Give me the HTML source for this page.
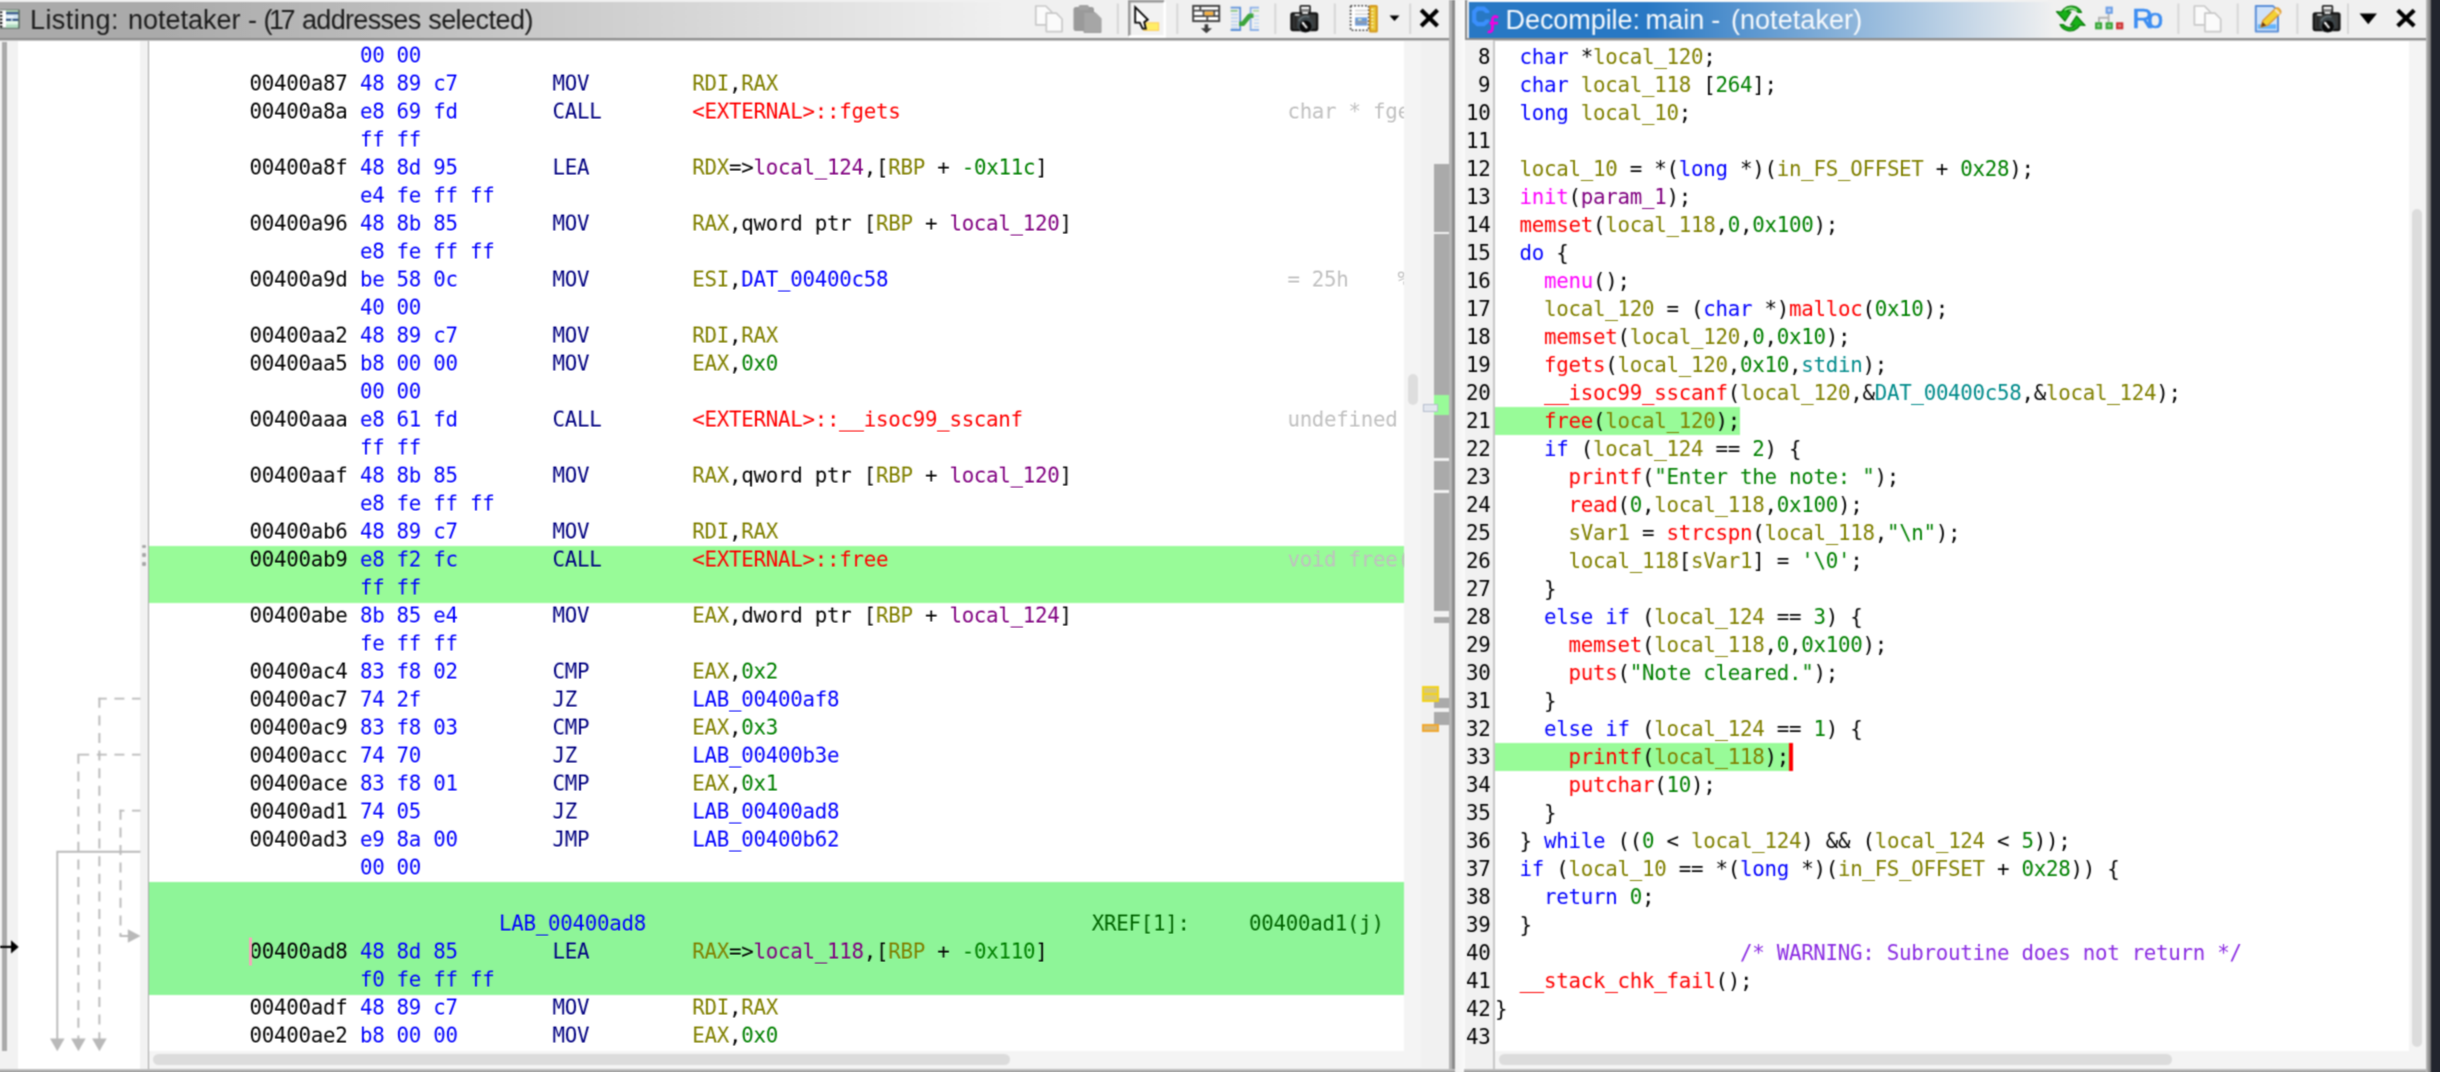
<!DOCTYPE html>
<html lang="en">
<head>
<meta charset="utf-8">
<title>Ghidra - notetaker</title>
<style>

html,body{margin:0;padding:0;background:#f0f0f0;}
#root{position:absolute;left:0;top:0;width:2440px;height:1072px;overflow:hidden;background:#f0f0f0;}
body{width:2440px;height:1072px;position:relative;}
#app,#txt{position:absolute;left:-8px;top:-8px;width:2456px;height:1088px;font-family:"DejaVu Sans Mono","Liberation Mono",monospace;}
#app{background:#f0f0f0;filter:url(#soft);}
#txt{filter:url(#softs);}
#txt2{position:absolute;left:-8px;top:-8px;width:2456px;height:1088px;font-family:"DejaVu Sans Mono","Liberation Mono",monospace;filter:url(#softd);}
.in{position:absolute;left:8px;top:8px;width:2440px;height:1072px;}
.abs{position:absolute;}
.row{position:absolute;left:0;width:2440px;height:28px;}
.f{position:absolute;top:0;height:28px;line-height:28px;font-family:"DejaVu Sans Mono","Liberation Mono",monospace;font-size:20.8px;letter-spacing:-0.28px;white-space:pre;color:#000;}
.f i{font-style:normal;}
.f u{text-decoration:none;background:linear-gradient(currentColor,currentColor) 0 22.8px/100% 2px no-repeat;}
.ln{position:absolute;top:0;left:1466px;width:24.299999999999955px;text-align:right;height:28px;line-height:28px;font-family:"DejaVu Sans Mono","Liberation Mono",monospace;font-size:20.8px;letter-spacing:-0.28px;color:#000;white-space:pre;}
.b{color:#0000ff;} .n{color:#000080;} .o{color:#808000;} .p{color:#800080;}
.g{color:#008000;} .r{color:#ff0000;} .c{color:#c0c0c0;} .m{color:#ff00ff;}
.t{color:#008b8b;} .v{color:#8a2be2;} .x{color:#006400;}
.title{position:absolute;white-space:pre;font-family:"Liberation Sans","DejaVu Sans",sans-serif;}
#lclip{position:absolute;left:150px;top:41px;width:1254px;height:1010px;overflow:hidden;}
#lclip .row{left:-150px;}
#lrows{position:absolute;left:0;top:-41px;}

</style>
</head>
<body>
<svg width="0" height="0" style="position:absolute;left:-10px;top:-10px" aria-hidden="true"><defs><filter id="soft" x="0" y="0" width="100%" height="100%" color-interpolation-filters="sRGB"><feConvolveMatrix order="3 1" kernelMatrix="1 2 1" divisor="4" edgeMode="duplicate"/><feConvolveMatrix order="1 3" kernelMatrix="1 2 1" divisor="4" edgeMode="duplicate"/></filter><filter id="softd" x="0" y="0" width="100%" height="100%" color-interpolation-filters="sRGB"><feConvolveMatrix order="3 1" kernelMatrix="1 3 1" divisor="5" edgeMode="none"/><feConvolveMatrix order="1 3" kernelMatrix="1 3 1" divisor="5" edgeMode="none"/></filter><filter id="softs" x="0" y="0" width="100%" height="100%" color-interpolation-filters="sRGB"><feConvolveMatrix order="3 1" kernelMatrix="1 3 1" divisor="5" edgeMode="none"/><feConvolveMatrix order="1 3" kernelMatrix="0.5 4.5 5" divisor="10" edgeMode="none"/></filter></defs></svg>
<div id="root">
<div id="app"><div class="in">
<div class="abs" style="left:-6px;top:2px;width:1458px;height:36px;background:linear-gradient(to right,#aaaaaa 0px,#aaaaaa 170px,#f0f0f0 1016px);"></div>
<div class="abs" style="left:-6px;top:38.2px;width:1458px;height:1.7px;background:#8e8e8e;"></div>
<div class="abs" style="left:-6px;top:39.9px;width:1458px;height:1.1px;background:#c8c8c8;"></div>
<div class="title" style="left:0;top:4.5px;width:600px;height:30px;line-height:30px;font-size:27px;color:#1a1a1a;"><span style="position:absolute;left:30.0px;top:0;letter-spacing:0.41px">Listing:  </span><span style="position:absolute;left:127.9px;top:0;letter-spacing:-0.01px">notetaker </span><span style="position:absolute;left:247.9px;top:0;letter-spacing:0.00px">- </span><span style="position:absolute;left:263.5px;top:0;letter-spacing:-3.50px">(17 </span><span style="position:absolute;left:302.0px;top:0;letter-spacing:-0.68px">addresses </span><span style="position:absolute;left:428.2px;top:0;letter-spacing:-0.54px">selected)</span></div>
<div class="abs" style="left:0px;top:41px;width:18px;height:1028px;background:#f2f2f2;"></div>
<div class="abs" style="left:2.1px;top:42px;width:5.1px;height:1009px;background:#aaaaaa;"></div>
<div class="abs" style="left:18px;top:41px;width:122px;height:1028px;background:#ffffff;"></div>
<div class="abs" style="left:140px;top:41px;width:8px;height:1028px;background:#f2f2f2;"></div>
<div class="abs" style="left:147.8px;top:41px;width:1.4px;height:1028px;background:#a6a6a6;"></div>
<div class="abs" style="left:142px;top:544.6px;width:3.6px;height:3.6px;background:#a8a8a8;border-radius:1.2px;"></div>
<div class="abs" style="left:142px;top:553.3px;width:3.6px;height:3.6px;background:#a8a8a8;border-radius:1.2px;"></div>
<div class="abs" style="left:142px;top:562px;width:3.6px;height:3.6px;background:#a8a8a8;border-radius:1.2px;"></div>
<div class="abs" style="left:149.2px;top:41px;width:1254.8px;height:1010px;background:#ffffff;"></div>
<div class="abs" style="left:149.2px;top:545.6px;width:1254.8px;height:57.2px;background:#98fb98;"></div>
<div class="abs" style="left:149.2px;top:881.7px;width:1254.8px;height:112.9px;background:#8ef598;"></div>
<div class="abs" style="left:149.5px;top:1051px;width:1254.5px;height:17px;background:#f4f4f4;"></div>
<div class="abs" style="left:153px;top:1053.5px;width:857px;height:11px;background:#dcdcdc;border-radius:5.5px;"></div>
<div class="abs" style="left:1404px;top:41px;width:17px;height:1027px;background:#f4f4f4;"></div>
<div class="abs" style="left:1408px;top:374px;width:10px;height:31px;background:#dedede;border-radius:5px;"></div>
<div class="abs" style="left:1421px;top:41px;width:13px;height:1027px;background:#f1f1f1;"></div>
<div class="abs" style="left:1434px;top:41px;width:15px;height:1027px;background:#f1f1f1;"></div>
<div class="abs" style="left:1434px;top:164px;width:15px;height:68px;background:#aaaaaa;"></div>
<div class="abs" style="left:1434px;top:234px;width:15px;height:161px;background:#aaaaaa;"></div>
<div class="abs" style="left:1434px;top:415px;width:15px;height:43px;background:#aaaaaa;"></div>
<div class="abs" style="left:1434px;top:461px;width:15px;height:29px;background:#aaaaaa;"></div>
<div class="abs" style="left:1434px;top:493px;width:15px;height:118px;background:#aaaaaa;"></div>
<div class="abs" style="left:1434px;top:617px;width:15px;height:6px;background:#aaaaaa;"></div>
<div class="abs" style="left:1434px;top:698px;width:15px;height:10px;background:#aaaaaa;"></div>
<div class="abs" style="left:1434px;top:712px;width:15px;height:13px;background:#aaaaaa;"></div>
<div class="abs" style="left:1434px;top:395px;width:15px;height:20px;background:#98fb98;"></div>
<div class="abs" style="left:1423px;top:403.5px;width:15px;height:8px;background:#e2e6ee;border:1.5px solid #b4bccc;box-sizing:border-box;"></div>
<div class="abs" style="left:1421.6px;top:685.6px;width:17.2px;height:16.8px;background:#d8c878;border:2px solid #f2d21c;box-sizing:border-box;"></div>
<div class="abs" style="left:1423px;top:692.8px;width:14.5px;height:2px;background:#f2d21c;"></div>
<div class="abs" style="left:1422px;top:723.5px;width:17px;height:8.5px;background:#d8b878;border:2px solid #f0a830;box-sizing:border-box;"></div>
<div class="abs" style="left:1449px;top:0px;width:3px;height:1070px;background:#b4b4b4;"></div>
<div class="abs" style="left:1452px;top:0px;width:3px;height:1070px;background:#8c8c8c;"></div>
<div class="abs" style="left:-6px;top:1068.5px;width:1461px;height:9px;background:linear-gradient(to bottom,#c8c8c8 0px,#999999 3.5px);"></div>
<svg class="abs" style="left:0;top:41px" width="150" height="1031" viewBox="0 41 150 1031">
<g fill="none" stroke="#b9b9b9" stroke-width="1.9" stroke-dasharray="10 7.6">
<path d="M140.5 698.6H98.5" stroke-dashoffset="1.5"/><path d="M99.4 697.8V1040"/>
<path d="M140.5 754.6H77.5" stroke-dashoffset="1.5"/><path d="M78.4 753.8V1040"/>
<path d="M140.5 810.6H119.6" stroke-dashoffset="1.5"/><path d="M120.5 809.8V936"/>
</g>
<g fill="none" stroke="#b9b9b9" stroke-width="1.9">
<path d="M119.6 936H130"/>
<path d="M140.5 851.8H57.3V1040"/>
</g>
<g fill="#b9b9b9" stroke="none">
<path d="M50 1038.6h14.6l-7.3 12.6z"/>
<path d="M71.1 1038.6h14.6l-7.3 12.6z"/>
<path d="M92.1 1038.6h14.6l-7.3 12.6z"/>
<path d="M127.8 929.2l12.8 6.8l-12.8 6.8z"/>
</g>
<g fill="#000" stroke="none">
<rect x="-2" y="945.8" width="14" height="2.2"/>
<path d="M11 940.3l7.7 6.6l-7.7 6.6z"/>
</g>
</svg>
<div class="abs" style="left:1455px;top:0px;width:10.5px;height:1072px;background:linear-gradient(to right,#f1f1f1,#fbfbfb);"></div>
<div class="abs" style="left:1465.2px;top:0px;width:2.2px;height:39.8px;background:#8a8a8a;"></div>
<div class="abs" style="left:1467.6px;top:0px;width:960px;height:2px;background:linear-gradient(to right,#ffffff 0px,#ffffff 178px,#f0f0f0 585px);"></div>
<div class="abs" style="left:1467.3px;top:0px;width:1.6px;height:38px;background:#e4e8ee;"></div>
<div class="abs" style="left:1468.9px;top:2px;width:957.1px;height:36px;background:linear-gradient(to right,#2878c4 0px,#2878c4 178px,#f0f0f0 585px);"></div>
<div class="abs" style="left:1465.5px;top:38.2px;width:962.5px;height:1.7px;background:#8e8e8e;"></div>
<div class="abs" style="left:1465.5px;top:39.9px;width:962.5px;height:1.1px;background:#c8c8c8;"></div>
<div class="title" style="left:0;top:4.5px;width:2000px;height:30px;line-height:30px;font-size:27px;color:#f6f9fc;"><span style="position:absolute;left:1505.6px;top:0;letter-spacing:-0.08px">Decompile: </span><span style="position:absolute;left:1645.6px;top:0;letter-spacing:0.03px">main </span><span style="position:absolute;left:1711.3px;top:0;letter-spacing:0.00px">-  </span><span style="position:absolute;left:1730.9px;top:0;letter-spacing:0.07px">(notetaker)</span></div>
<div class="abs" style="left:1465.3px;top:40px;width:28.1px;height:1029px;background:#f1f1f1;"></div>
<div class="abs" style="left:1493.3px;top:41px;width:1.6px;height:1028px;background:#c6c6c6;"></div>
<div class="abs" style="left:1494.9px;top:41px;width:914.1px;height:1009.5px;background:#ffffff;"></div>
<div class="abs" style="left:1494.9px;top:407.2px;width:244.7px;height:28px;background:#98fb98;"></div>
<div class="abs" style="left:1494.9px;top:743.2px;width:293.7px;height:28px;background:#98fb98;"></div>
<div class="abs" style="left:1788.8px;top:743.2px;width:3.8px;height:28px;background:#ff0000;"></div>
<div class="abs" style="left:2409px;top:41px;width:17px;height:1028px;background:#f4f4f4;"></div>
<div class="abs" style="left:2412.3px;top:209px;width:10px;height:838px;background:#dcdcdc;border-radius:5px;"></div>
<div class="abs" style="left:1494.9px;top:1050.5px;width:914.1px;height:18px;background:#f4f4f4;"></div>
<div class="abs" style="left:1498.6px;top:1054.4px;width:673px;height:10.4px;background:#dcdcdc;border-radius:5.2px;"></div>
<div class="abs" style="left:1464px;top:1068.5px;width:964px;height:9px;background:linear-gradient(to bottom,#c8c8c8 0px,#999999 3.5px);"></div>
<div class="abs" style="left:2426px;top:-6px;width:5px;height:1084px;background:linear-gradient(to right,#c0c0c0,#707070);"></div>
<div class="abs" style="left:2431px;top:-6px;width:15px;height:1084px;background:#22252e;"></div>
<svg class="abs" style="left:0;top:0" width="2440" height="41" viewBox="0 0 2440 41">
<g>
<rect x="-2" y="9.6" width="21.6" height="19" fill="#46584e"/>
<rect x="-2" y="10.2" width="8" height="17.4" fill="#ffffff"/>
<rect x="6" y="10.2" width="12.2" height="17.4" fill="#c4ecd2"/>
<rect x="6" y="10.2" width="12.2" height="2" fill="#a4c8a8"/>
<rect x="6" y="12.2" width="12.2" height="2.2" fill="#34508c"/>
<rect x="6" y="14.6" width="12.2" height="4" fill="#d4e4f4"/>
<rect x="7.5" y="16" width="6" height="1.8" fill="#f4f8ff"/>
<rect x="6" y="18.8" width="12.2" height="2" fill="#2c4880"/>
<rect x="11" y="18.8" width="1.6" height="2" fill="#c4d8ec"/>
<rect x="6" y="21.2" width="12.2" height="3.4" fill="#e2f6e8"/>
<rect x="6" y="24.6" width="12.2" height="3" fill="#b0dcc0"/>
<path d="M1.2 11.4v17" stroke="#000" stroke-width="2.2" stroke-dasharray="1.9 1.65"/>
</g>
<g stroke="#c8c8c8" stroke-width="1.7" fill="#fbfbfb" stroke-linejoin="round">
<path d="M1035.8 6h10l5.8 5.8v13H1035.8z"/>
<path d="M1046.3 13.2h10l5.8 5.8v12.6H1046.3z"/>
</g>
<g>
<rect x="1073.5" y="7" width="20.5" height="24" rx="2.5" fill="#9a9a9a"/>
<rect x="1078.5" y="5" width="10.5" height="5" rx="2" fill="#a2a2a2"/>
<path d="M1084 12.5h11l6 6v14h-17z" fill="#a6a6a6" stroke="#9c9c9c" stroke-width="1"/>
</g>
<rect x="1116.8" y="3.5" width="2" height="30.5" fill="#d6d6d6"/>
<g>
<rect x="1128" y="0" width="38" height="38" fill="#f2f2f2"/>
<rect x="1128" y="0" width="36" height="2.6" fill="#9a9a9a"/>
<rect x="1128" y="0" width="2.6" height="36" fill="#9a9a9a"/>
<rect x="1163.4" y="2" width="2.6" height="36" fill="#ffffff"/>
<rect x="1129" y="35.2" width="37" height="2.8" fill="#ffffff"/>
<rect x="1143.8" y="22.8" width="14.8" height="7.6" fill="#ffee66" stroke="#ffd266" stroke-width="1.2"/>
<path d="M1135.2 7.2v15.4h4.6l2.8 6h3.2l-1.6-6.4l3.6-2.6z" fill="#ffffff" stroke="#000" stroke-width="1.8" stroke-linejoin="miter"/>
</g>
<rect x="1176.3" y="3.5" width="2" height="30.5" fill="#d6d6d6"/>
<g>
<rect x="1193.2" y="5.9" width="26" height="15.2" fill="#ffffff" stroke="#444" stroke-width="2"/>
<path d="M1193 10.6h26M1193 16.2h26M1200.3 6v4.6M1203.6 10.6v5.6M1214.2 10.6v5.6M1207.3 16.2v5" stroke="#444" stroke-width="1.8" fill="none"/>
<rect x="1204.6" y="11.7" width="8.6" height="3.6" fill="#f6b040"/>
<path d="M1204.6 24.3h3.6v4h3.8l-5.6 5l-5.6-5h3.8z" fill="#3c3c3c"/>
</g>
<g fill="none">
<path d="M1230.6 7.6h9.6v22.4h-9.6" stroke="#5c90d8" stroke-width="1.8"/>
<path d="M1259 7.6h-8.4v22.4h8.4" stroke="#8ab0e8" stroke-width="1.8"/>
<path d="M1230.6 10.8h7" stroke="#7cc07c" stroke-width="1.6"/>
<path d="M1253 10.8h6" stroke="#a8d8a0" stroke-width="1.6"/>
<path d="M1231 14.5h7M1231 18h7M1231 21.5h7M1231 25h7M1231 28h7" stroke="#b8d0f0" stroke-width="1.4"/>
<path d="M1254 16h5M1254 19.6h5M1254 23.2h5M1254 26.8h5" stroke="#c0d8f4" stroke-width="1.4"/>
<path d="M1239 23.8h4l6.5-8h4" stroke="#3da53d" stroke-width="4.6" stroke-linejoin="round"/>
</g>
<rect x="1274.3" y="3.5" width="2" height="30.5" fill="#d6d6d6"/>
<g>
<rect x="1299.5" y="5" width="11.4" height="9.5" rx="1.6" fill="#262626"/>
<rect x="1301.2" y="6.7" width="8" height="2.5" fill="#f6f6f6"/>
<rect x="1301.2" y="9.2" width="8" height="2.7" fill="#8c8c8c"/>
<rect x="1290.3" y="12.2" width="28" height="19" rx="2.6" fill="#161616"/>
<rect x="1292.7" y="14.4" width="23.2" height="14.4" rx="1" fill="#3a3c3c"/>
<rect x="1293.8999999999999" y="15.6" width="3.2" height="12.2" fill="#2a2a2a"/>
<rect x="1302.3" y="12" width="5.8" height="1.8" fill="#f0f0f0"/>
<rect x="1294.8999999999999" y="13.9" width="4.6" height="1.7" fill="#d4d4d4"/>
<circle cx="1305.3" cy="24.4" r="8.2" fill="#3c4448"/>
<path d="M1298.7 21a8 8 0 0 1 10.5-4" stroke="#5e686c" stroke-width="2" fill="none"/>
<circle cx="1305.6" cy="26.3" r="5.9" fill="#080808"/>
<path d="M1302.8999999999999 23l3.6 4.4" stroke="#d8d8d8" stroke-width="2.3" stroke-linecap="round"/>
<circle cx="1303.2" cy="23.3" r="1.1" fill="#ffffff"/>
</g>
<rect x="1333.8" y="3.5" width="2" height="30.5" fill="#d6d6d6"/>
<g>
<rect x="1350.6" y="5.8" width="18" height="24.4" fill="#ffffff" stroke="#333" stroke-width="1.6" stroke-dasharray="1.7 1.9"/>
<path d="M1355 10.6h12M1355 14.2h12" stroke="#d4d4d4" stroke-width="1.5"/>
<rect x="1355.2" y="17.4" width="12" height="8.2" fill="#6a9cdc"/>
<rect x="1355.2" y="21" width="12" height="2.6" fill="#8a9ab4"/>
<rect x="1358" y="18.8" width="3.6" height="1.6" fill="#e8f0c0"/>
<rect x="1369" y="5" width="8.8" height="27.5" rx="1.6" fill="#d4981c"/>
<rect x="1371" y="7" width="4.8" height="23.5" fill="#e8c636"/>
<path d="M1371 9.5h2.6M1371 13h2.6M1371 16.5h2.6M1371 20h2.6M1371 23.5h2.6M1371 27h2.6" stroke="#fff8d8" stroke-width="1.2"/>
</g>
<path d="M1389.5 15.6H1399.5L1394.5 21z" fill="#000"/>
<rect x="1409.2" y="3.5" width="2" height="30.5" fill="#d6d6d6"/>
<path d="M1421.2 10.0L1437.5 26.0M1437.5 10.0L1421.2 26.0" stroke="#000" stroke-width="4.2" stroke-linecap="butt" fill="none"/>
<g>
<path d="M1487.2 13v-1.2l-3.4-3.2h-6.2l-3.4 3.2v9.2l3.4 3.2h6.2l3.4-3.2v-1.4" fill="none" stroke="#3a8ffc" stroke-width="4.2" stroke-linejoin="miter"/>
<path d="M1498 17.8c-3-2.6-5.6-1-5.6 2.4v8c0 3-2 4.4-4.6 3.2M1489.6 23.2h8.4" fill="none" stroke="#f000e0" stroke-width="2.8"/>
</g>
<g>
<path d="M2081.5 12.5c-3-6.5-12-8.5-17.5-3.5l-2.5 3l-5 -0.5l8.5 9.5l6-9l-4 -0.3c3-3.2 8-3.2 11.5 0.8z" fill="#18b018" stroke="#0a7a0a" stroke-width="1.2" stroke-linejoin="round"/>
<path d="M2060 24.5c3 6.5 12 8.5 17.5 3.5l2.5-3l5 0.5l-8.5-9.5l-6 9l4 0.3c-3 3.2-8 3.2-11.5-0.8z" fill="#18b018" stroke="#0a7a0a" stroke-width="1.2" stroke-linejoin="round"/>
<path d="M2064.5 10c3.5-2.6 9-2.4 12.5 0.5" stroke="#a8f0a0" stroke-width="1.5" fill="none"/>
</g>
<g>
<path d="M2108.6 13v9M2099 22v-4.2h9.6" fill="none" stroke="#b4b4b4" stroke-width="1.9"/>
<rect x="2105.6" y="6.6" width="7.2" height="7.2" fill="#6a9ee6"/><rect x="2107.6" y="8.6" width="3.2" height="3.2" fill="#b8ccf4"/>
<rect x="2095.1" y="22.3" width="7" height="7" fill="#35a535"/><rect x="2097.1" y="24.3" width="3" height="3" fill="#80cc80"/>
<rect x="2105.6" y="22.3" width="7.2" height="7" fill="#35a535"/><rect x="2107.6" y="24.3" width="3.2" height="3" fill="#80cc80"/>
<rect x="2116.1" y="22.3" width="7.2" height="7" fill="#cc3030"/><rect x="2118.1" y="24.3" width="3.2" height="3" fill="#e07878"/>
</g>
<rect x="2177.4" y="3.5" width="2" height="30.5" fill="#d6d6d6"/>
<g stroke="#c8c8c8" stroke-width="1.7" fill="#fbfbfb" stroke-linejoin="round">
<path d="M2194.4 6h10l5.8 5.8v13H2194.4z"/>
<path d="M2204.9 13.2h10l5.8 5.8v12.6H2204.9z"/>
</g>
<rect x="2236.7" y="3.5" width="2" height="30.5" fill="#d6d6d6"/>
<g>
<path d="M2255.8 5.9h17l5.2 5v20.6h-22.2z" fill="#cfe2f8" stroke="#5a8ed8" stroke-width="2" stroke-linejoin="round"/>
<rect x="2257.8" y="24.3" width="18.4" height="4.6" fill="#62b4fc"/>
<path d="M2261 27l2-6.5l12.5-12c2.5-1.5 6 1.5 5 4.5l-12.5 12z" fill="#f2d232" stroke="#e09a38" stroke-width="1.6" stroke-linejoin="round"/>
<path d="M2261 27l1.6-5l3.6 3.6z" fill="#6a3a10"/>
<path d="M2275 9.5l4.5 4.5" stroke="#f8e0c0" stroke-width="2.2"/>
</g>
<rect x="2296.4" y="3.5" width="2" height="30.5" fill="#d6d6d6"/>
<g>
<rect x="2321.7999999999997" y="5" width="11.4" height="9.5" rx="1.6" fill="#262626"/>
<rect x="2323.5" y="6.7" width="8" height="2.5" fill="#f6f6f6"/>
<rect x="2323.5" y="9.2" width="8" height="2.7" fill="#8c8c8c"/>
<rect x="2312.6" y="12.2" width="28" height="19" rx="2.6" fill="#161616"/>
<rect x="2315.0" y="14.4" width="23.2" height="14.4" rx="1" fill="#3a3c3c"/>
<rect x="2316.2" y="15.6" width="3.2" height="12.2" fill="#2a2a2a"/>
<rect x="2324.6" y="12" width="5.8" height="1.8" fill="#f0f0f0"/>
<rect x="2317.2" y="13.9" width="4.6" height="1.7" fill="#d4d4d4"/>
<circle cx="2327.6" cy="24.4" r="8.2" fill="#3c4448"/>
<path d="M2321.0 21a8 8 0 0 1 10.5-4" stroke="#5e686c" stroke-width="2" fill="none"/>
<circle cx="2327.9" cy="26.3" r="5.9" fill="#080808"/>
<path d="M2325.2 23l3.6 4.4" stroke="#d8d8d8" stroke-width="2.3" stroke-linecap="round"/>
<circle cx="2325.5" cy="23.3" r="1.1" fill="#ffffff"/>
</g>
<rect x="2347" y="3.5" width="2" height="30.5" fill="#d6d6d6"/>
<path d="M2359.5 13.4H2377L2368.25 24.2z" fill="#000"/>
<path d="M2397.7 10.2L2414.2 26.0M2414.2 10.2L2397.7 26.0" stroke="#000" stroke-width="4.2" stroke-linecap="butt" fill="none"/>
</svg>
<div class="title" style="left:2132.2px;top:3.2px;height:30px;line-height:30px;font-size:28.5px;letter-spacing:-5.6px;color:#3c8df2;-webkit-text-stroke:0.7px #3c8df2;">Ro</div>
</div></div>
<div id="txt"><div class="in">
<div id="lclip"><div id="lrows">
<div class="row" style="top:41px"><span class="f b" style="left:359.9px">00 00</span></div>
<div class="row" style="top:69px"><span class="f" style="left:249.5px">00400a87</span><span class="f b" style="left:359.9px">48 89 c7</span><span class="f n" style="left:552.5px">MOV</span><span class="f" style="left:692.3px"><i class="o">RDI</i>,<i class="o">RAX</i></span></div>
<div class="row" style="top:97px"><span class="f" style="left:249.5px">00400a8a</span><span class="f b" style="left:359.9px">e8 69 fd</span><span class="f n" style="left:552.5px">CALL</span><span class="f" style="left:692.3px"><i class="r">&lt;EXTERNAL&gt;::fgets</i></span><span class="f c" style="left:1287.4px">char * fge</span></div>
<div class="row" style="top:125px"><span class="f b" style="left:359.9px">ff ff</span></div>
<div class="row" style="top:153px"><span class="f" style="left:249.5px">00400a8f</span><span class="f b" style="left:359.9px">48 8d 95</span><span class="f n" style="left:552.5px">LEA</span><span class="f" style="left:692.3px"><i class="o">RDX</i>=&gt;<i class="p">local<u>_</u>124</i>,[<i class="o">RBP</i> + <i class="g">-0x11c</i>]</span></div>
<div class="row" style="top:181px"><span class="f b" style="left:359.9px">e4 fe ff ff</span></div>
<div class="row" style="top:209px"><span class="f" style="left:249.5px">00400a96</span><span class="f b" style="left:359.9px">48 8b 85</span><span class="f n" style="left:552.5px">MOV</span><span class="f" style="left:692.3px"><i class="o">RAX</i>,qword ptr [<i class="o">RBP</i> + <i class="p">local<u>_</u>120</i>]</span></div>
<div class="row" style="top:237px"><span class="f b" style="left:359.9px">e8 fe ff ff</span></div>
<div class="row" style="top:265px"><span class="f" style="left:249.5px">00400a9d</span><span class="f b" style="left:359.9px">be 58 0c</span><span class="f n" style="left:552.5px">MOV</span><span class="f" style="left:692.3px"><i class="o">ESI</i>,<i class="b">DAT<u>_</u>00400c58</i></span><span class="f c" style="left:1287.4px">= 25h    %</span></div>
<div class="row" style="top:293px"><span class="f b" style="left:359.9px">40 00</span></div>
<div class="row" style="top:321px"><span class="f" style="left:249.5px">00400aa2</span><span class="f b" style="left:359.9px">48 89 c7</span><span class="f n" style="left:552.5px">MOV</span><span class="f" style="left:692.3px"><i class="o">RDI</i>,<i class="o">RAX</i></span></div>
<div class="row" style="top:349px"><span class="f" style="left:249.5px">00400aa5</span><span class="f b" style="left:359.9px">b8 00 00</span><span class="f n" style="left:552.5px">MOV</span><span class="f" style="left:692.3px"><i class="o">EAX</i>,<i class="g">0x0</i></span></div>
<div class="row" style="top:377px"><span class="f b" style="left:359.9px">00 00</span></div>
<div class="row" style="top:405px"><span class="f" style="left:249.5px">00400aaa</span><span class="f b" style="left:359.9px">e8 61 fd</span><span class="f n" style="left:552.5px">CALL</span><span class="f" style="left:692.3px"><i class="r">&lt;EXTERNAL&gt;::<u>_</u><u>_</u>isoc99<u>_</u>sscanf</i></span><span class="f c" style="left:1287.4px">undefined</span></div>
<div class="row" style="top:433px"><span class="f b" style="left:359.9px">ff ff</span></div>
<div class="row" style="top:461px"><span class="f" style="left:249.5px">00400aaf</span><span class="f b" style="left:359.9px">48 8b 85</span><span class="f n" style="left:552.5px">MOV</span><span class="f" style="left:692.3px"><i class="o">RAX</i>,qword ptr [<i class="o">RBP</i> + <i class="p">local<u>_</u>120</i>]</span></div>
<div class="row" style="top:489px"><span class="f b" style="left:359.9px">e8 fe ff ff</span></div>
<div class="row" style="top:517px"><span class="f" style="left:249.5px">00400ab6</span><span class="f b" style="left:359.9px">48 89 c7</span><span class="f n" style="left:552.5px">MOV</span><span class="f" style="left:692.3px"><i class="o">RDI</i>,<i class="o">RAX</i></span></div>
<div class="row" style="top:545px"><span class="f" style="left:249.5px">00400ab9</span><span class="f b" style="left:359.9px">e8 f2 fc</span><span class="f n" style="left:552.5px">CALL</span><span class="f" style="left:692.3px"><i class="r">&lt;EXTERNAL&gt;::free</i></span><span class="f c" style="left:1287.4px">void free(</span></div>
<div class="row" style="top:573px"><span class="f b" style="left:359.9px">ff ff</span></div>
<div class="row" style="top:601px"><span class="f" style="left:249.5px">00400abe</span><span class="f b" style="left:359.9px">8b 85 e4</span><span class="f n" style="left:552.5px">MOV</span><span class="f" style="left:692.3px"><i class="o">EAX</i>,dword ptr [<i class="o">RBP</i> + <i class="p">local<u>_</u>124</i>]</span></div>
<div class="row" style="top:629px"><span class="f b" style="left:359.9px">fe ff ff</span></div>
<div class="row" style="top:657px"><span class="f" style="left:249.5px">00400ac4</span><span class="f b" style="left:359.9px">83 f8 02</span><span class="f n" style="left:552.5px">CMP</span><span class="f" style="left:692.3px"><i class="o">EAX</i>,<i class="g">0x2</i></span></div>
<div class="row" style="top:685px"><span class="f" style="left:249.5px">00400ac7</span><span class="f b" style="left:359.9px">74 2f</span><span class="f n" style="left:552.5px">JZ</span><span class="f" style="left:692.3px"><i class="b">LAB<u>_</u>00400af8</i></span></div>
<div class="row" style="top:713px"><span class="f" style="left:249.5px">00400ac9</span><span class="f b" style="left:359.9px">83 f8 03</span><span class="f n" style="left:552.5px">CMP</span><span class="f" style="left:692.3px"><i class="o">EAX</i>,<i class="g">0x3</i></span></div>
<div class="row" style="top:741px"><span class="f" style="left:249.5px">00400acc</span><span class="f b" style="left:359.9px">74 70</span><span class="f n" style="left:552.5px">JZ</span><span class="f" style="left:692.3px"><i class="b">LAB<u>_</u>00400b3e</i></span></div>
<div class="row" style="top:769px"><span class="f" style="left:249.5px">00400ace</span><span class="f b" style="left:359.9px">83 f8 01</span><span class="f n" style="left:552.5px">CMP</span><span class="f" style="left:692.3px"><i class="o">EAX</i>,<i class="g">0x1</i></span></div>
<div class="row" style="top:797px"><span class="f" style="left:249.5px">00400ad1</span><span class="f b" style="left:359.9px">74 05</span><span class="f n" style="left:552.5px">JZ</span><span class="f" style="left:692.3px"><i class="b">LAB<u>_</u>00400ad8</i></span></div>
<div class="row" style="top:825px"><span class="f" style="left:249.5px">00400ad3</span><span class="f b" style="left:359.9px">e9 8a 00</span><span class="f n" style="left:552.5px">JMP</span><span class="f" style="left:692.3px"><i class="b">LAB<u>_</u>00400b62</i></span></div>
<div class="row" style="top:853px"><span class="f b" style="left:359.9px">00 00</span></div>
<div class="row" style="top:909px"><span class="f b" style="left:499px">LAB<u>_</u>00400ad8</span><span class="f x" style="left:1091.8px">XREF[1]:</span><span class="f x" style="left:1249px">00400ad1(j)</span></div>
<div class="row" style="top:937px"><span class="f" style="left:249.5px">00400ad8</span><span class="f b" style="left:359.9px">48 8d 85</span><span class="f n" style="left:552.5px">LEA</span><span class="f" style="left:692.3px"><i class="o">RAX</i>=&gt;<i class="p">local<u>_</u>118</i>,[<i class="o">RBP</i> + <i class="g">-0x110</i>]</span></div>
<div class="row" style="top:965px"><span class="f b" style="left:359.9px">f0 fe ff ff</span></div>
<div class="row" style="top:993px"><span class="f" style="left:249.5px">00400adf</span><span class="f b" style="left:359.9px">48 89 c7</span><span class="f n" style="left:552.5px">MOV</span><span class="f" style="left:692.3px"><i class="o">RDI</i>,<i class="o">RAX</i></span></div>
<div class="row" style="top:1021px"><span class="f" style="left:249.5px">00400ae2</span><span class="f b" style="left:359.9px">b8 00 00</span><span class="f n" style="left:552.5px">MOV</span><span class="f" style="left:692.3px"><i class="o">EAX</i>,<i class="g">0x0</i></span></div>
</div></div>
<div class="abs" style="left:249.3px;top:937px;width:3px;height:28px;background:#f4a8ba;"></div>
</div></div>
<div id="txt2"><div class="in">
<div class="row" style="top:43px"><span class="ln">8</span><span class="f" style="left:1495.1px">  <i class="b">char</i> *<i class="o">local<u>_</u>120</i>;</span></div>
<div class="row" style="top:71px"><span class="ln">9</span><span class="f" style="left:1495.1px">  <i class="b">char</i> <i class="o">local<u>_</u>118</i> [<i class="g">264</i>];</span></div>
<div class="row" style="top:99px"><span class="ln">10</span><span class="f" style="left:1495.1px">  <i class="b">long</i> <i class="o">local<u>_</u>10</i>;</span></div>
<div class="row" style="top:127px"><span class="ln">11</span></div>
<div class="row" style="top:155px"><span class="ln">12</span><span class="f" style="left:1495.1px">  <i class="o">local<u>_</u>10</i> = *(<i class="b">long</i> *)(<i class="o">in<u>_</u>FS<u>_</u>OFFSET</i> + <i class="g">0x28</i>);</span></div>
<div class="row" style="top:183px"><span class="ln">13</span><span class="f" style="left:1495.1px">  <i class="m">init</i>(<i class="p">param<u>_</u>1</i>);</span></div>
<div class="row" style="top:211px"><span class="ln">14</span><span class="f" style="left:1495.1px">  <i class="r">memset</i>(<i class="o">local<u>_</u>118</i>,<i class="g">0</i>,<i class="g">0x100</i>);</span></div>
<div class="row" style="top:239px"><span class="ln">15</span><span class="f" style="left:1495.1px">  <i class="b">do</i> {</span></div>
<div class="row" style="top:267px"><span class="ln">16</span><span class="f" style="left:1495.1px">    <i class="m">menu</i>();</span></div>
<div class="row" style="top:295px"><span class="ln">17</span><span class="f" style="left:1495.1px">    <i class="o">local<u>_</u>120</i> = (<i class="b">char</i> *)<i class="r">malloc</i>(<i class="g">0x10</i>);</span></div>
<div class="row" style="top:323px"><span class="ln">18</span><span class="f" style="left:1495.1px">    <i class="r">memset</i>(<i class="o">local<u>_</u>120</i>,<i class="g">0</i>,<i class="g">0x10</i>);</span></div>
<div class="row" style="top:351px"><span class="ln">19</span><span class="f" style="left:1495.1px">    <i class="r">fgets</i>(<i class="o">local<u>_</u>120</i>,<i class="g">0x10</i>,<i class="t">stdin</i>);</span></div>
<div class="row" style="top:379px"><span class="ln">20</span><span class="f" style="left:1495.1px">    <i class="r"><u>_</u><u>_</u>isoc99<u>_</u>sscanf</i>(<i class="o">local<u>_</u>120</i>,&amp;<i class="t">DAT<u>_</u>00400c58</i>,&amp;<i class="o">local<u>_</u>124</i>);</span></div>
<div class="row" style="top:407px"><span class="ln">21</span><span class="f" style="left:1495.1px">    <i class="r">free</i>(<i class="o">local<u>_</u>120</i>);</span></div>
<div class="row" style="top:435px"><span class="ln">22</span><span class="f" style="left:1495.1px">    <i class="b">if</i> (<i class="o">local<u>_</u>124</i> == <i class="g">2</i>) {</span></div>
<div class="row" style="top:463px"><span class="ln">23</span><span class="f" style="left:1495.1px">      <i class="r">printf</i>(<i class="g">"Enter the note: "</i>);</span></div>
<div class="row" style="top:491px"><span class="ln">24</span><span class="f" style="left:1495.1px">      <i class="r">read</i>(<i class="g">0</i>,<i class="o">local<u>_</u>118</i>,<i class="g">0x100</i>);</span></div>
<div class="row" style="top:519px"><span class="ln">25</span><span class="f" style="left:1495.1px">      <i class="o">sVar1</i> = <i class="r">strcspn</i>(<i class="o">local<u>_</u>118</i>,<i class="g">"\n"</i>);</span></div>
<div class="row" style="top:547px"><span class="ln">26</span><span class="f" style="left:1495.1px">      <i class="o">local<u>_</u>118</i>[<i class="o">sVar1</i>] = <i class="g">'\0'</i>;</span></div>
<div class="row" style="top:575px"><span class="ln">27</span><span class="f" style="left:1495.1px">    }</span></div>
<div class="row" style="top:603px"><span class="ln">28</span><span class="f" style="left:1495.1px">    <i class="b">else if</i> (<i class="o">local<u>_</u>124</i> == <i class="g">3</i>) {</span></div>
<div class="row" style="top:631px"><span class="ln">29</span><span class="f" style="left:1495.1px">      <i class="r">memset</i>(<i class="o">local<u>_</u>118</i>,<i class="g">0</i>,<i class="g">0x100</i>);</span></div>
<div class="row" style="top:659px"><span class="ln">30</span><span class="f" style="left:1495.1px">      <i class="r">puts</i>(<i class="g">"Note cleared."</i>);</span></div>
<div class="row" style="top:687px"><span class="ln">31</span><span class="f" style="left:1495.1px">    }</span></div>
<div class="row" style="top:715px"><span class="ln">32</span><span class="f" style="left:1495.1px">    <i class="b">else if</i> (<i class="o">local<u>_</u>124</i> == <i class="g">1</i>) {</span></div>
<div class="row" style="top:743px"><span class="ln">33</span><span class="f" style="left:1495.1px">      <i class="r">printf</i>(<i class="o">local<u>_</u>118</i>);</span></div>
<div class="row" style="top:771px"><span class="ln">34</span><span class="f" style="left:1495.1px">      <i class="r">putchar</i>(<i class="g">10</i>);</span></div>
<div class="row" style="top:799px"><span class="ln">35</span><span class="f" style="left:1495.1px">    }</span></div>
<div class="row" style="top:827px"><span class="ln">36</span><span class="f" style="left:1495.1px">  } <i class="b">while</i> ((<i class="g">0</i> &lt; <i class="o">local<u>_</u>124</i>) &amp;&amp; (<i class="o">local<u>_</u>124</i> &lt; <i class="g">5</i>));</span></div>
<div class="row" style="top:855px"><span class="ln">37</span><span class="f" style="left:1495.1px">  <i class="b">if</i> (<i class="o">local<u>_</u>10</i> == *(<i class="b">long</i> *)(<i class="o">in<u>_</u>FS<u>_</u>OFFSET</i> + <i class="g">0x28</i>)) {</span></div>
<div class="row" style="top:883px"><span class="ln">38</span><span class="f" style="left:1495.1px">    <i class="b">return</i> <i class="g">0</i>;</span></div>
<div class="row" style="top:911px"><span class="ln">39</span><span class="f" style="left:1495.1px">  }</span></div>
<div class="row" style="top:939px"><span class="ln">40</span><span class="f" style="left:1495.1px">                    <i class="v">/* WARNING: Subroutine does not return */</i></span></div>
<div class="row" style="top:967px"><span class="ln">41</span><span class="f" style="left:1495.1px">  <i class="r"><u>_</u><u>_</u>stack<u>_</u>chk<u>_</u>fail</i>();</span></div>
<div class="row" style="top:995px"><span class="ln">42</span><span class="f" style="left:1495.1px">}</span></div>
<div class="row" style="top:1023px"><span class="ln">43</span></div>
</div></div>
</div>
</body>
</html>
